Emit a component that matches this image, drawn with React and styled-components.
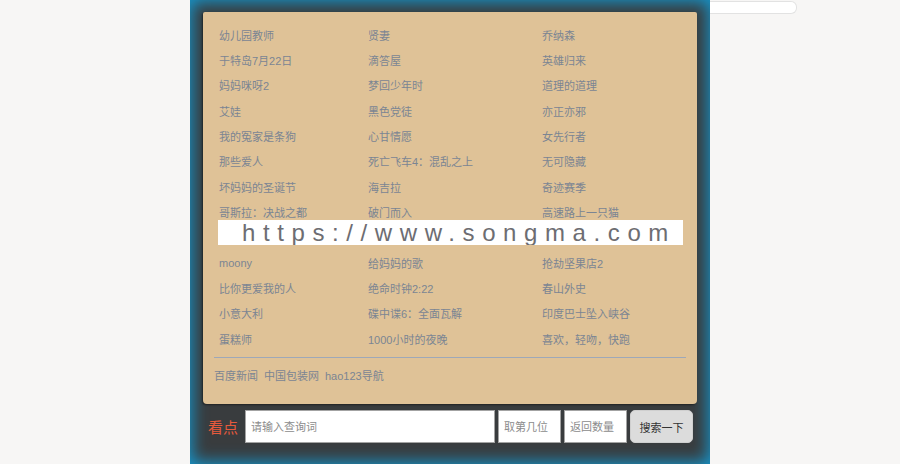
import React from 'react';
import styled, { createGlobalStyle } from 'styled-components';

const GlobalStyle = createGlobalStyle`
  html, body {
    margin: 0;
    padding: 0;
    background: #f7f6f5;
    overflow: hidden;
  }
  body {
    font-family: "Liberation Sans", "Noto Sans CJK SC", sans-serif;
  }
`;

const Page = styled.div`
  display: grid;
  grid-template-columns: 1fr 520px 1fr;
  height: 464px;
`;

const Side = styled.div`
  padding-top: 1px;
`;

const TopInput = styled.div`
  width: 86px;
  height: 11px;
  background: #fff;
  border: 1px solid #e2e2e2;
  border-left: none;
  border-radius: 0 6px 6px 0;
`;

const Shell = styled.div`
  background: #393c3e;
  box-shadow: inset 0 0 16px 2px #1598cf;
  padding: 12px 13px 0 13px;
  display: flex;
  flex-direction: column;
`;

const Panel = styled.div`
  position: relative;
  height: 392px;
  box-sizing: border-box;
  background: #dfc297;
  border-radius: 2px 2px 4px 4px;
  box-shadow: -1px 1px 2px rgba(0, 0, 0, 0.45);
  padding: 10px 11px 0 11px;
`;

const List = styled.ul`
  list-style: none;
  margin: 0;
  padding: 0 0 0 5px;
  display: grid;
  grid-template-columns: 149px 174px 1fr;
  grid-auto-rows: 25.33px;
`;

const Item = styled.li`
  font-size: 11px;
  color: #7b8593;
  display: flex;
  align-items: center;
  white-space: nowrap;
`;

const Divider = styled.hr`
  border: none;
  border-top: 1px solid #9ea8b8;
  margin: 6px 0 0 0;
`;

const Links = styled.div`
  display: flex;
  gap: 6px;
  padding-top: 9px;
  font-size: 11px;
  color: #7b8593;
`;

const Watermark = styled.div`
  position: absolute;
  top: 208px;
  left: 15px;
  width: 465px;
  height: 25px;
  background: #fff;
  color: #6d6d72;
  font-family: "Liberation Sans", sans-serif;
  font-size: 24px;
  letter-spacing: 7.6px;
  line-height: 25px;
  padding-left: 24px;
  box-sizing: border-box;
  white-space: nowrap;
  overflow: hidden;
`;

const SearchBar = styled.div`
  display: flex;
  align-items: center;
  height: 33px;
  margin-top: 6px;
  padding-left: 5px;
`;

const Brand = styled.span`
  color: #e75a3c;
  font-size: 15px;
  width: 37px;
  flex-shrink: 0;
`;

const Field = styled.input`
  box-sizing: border-box;
  width: ${(p) => p.$w}px;
  height: 33px;
  margin-right: 3px;
  border: 1px solid #a3a3a3;
  background: #fff;
  padding: 0 5px;
  font-family: inherit;
  font-size: 11px;
  outline: none;
  &::placeholder {
    color: #8c8c8c;
  }
`;

const Button = styled.button`
  box-sizing: border-box;
  width: 63px;
  height: 33px;
  border: 1px solid #cfcfcf;
  border-radius: 5px;
  background: #dcdcdc;
  color: #333;
  font-family: inherit;
  font-size: 11px;
  padding: 0;
`;

// row 9 sits under the watermark, so it is left blank
const titles = [
  ['幼儿园教师', '贤妻', '乔纳森'],
  ['于特岛7月22日', '滴答屋', '英雄归来'],
  ['妈妈咪呀2', '梦回少年时', '道理的道理'],
  ['艾娃', '黑色党徒', '亦正亦邪'],
  ['我的冤家是条狗', '心甘情愿', '女先行者'],
  ['那些爱人', '死亡飞车4：混乱之上', '无可隐藏'],
  ['坏妈妈的圣诞节', '海吉拉', '奇迹赛季'],
  ['哥斯拉：决战之都', '破门而入', '高速路上一只猫'],
  ['', '', ''],
  ['moony', '给妈妈的歌', '抢劫坚果店2'],
  ['比你更爱我的人', '绝命时钟2:22', '春山外史'],
  ['小意大利', '碟中谍6：全面瓦解', '印度巴士坠入峡谷'],
  ['蛋糕师', '1000小时的夜晚', '喜欢，轻吻，快跑'],
];

export default function App() {
  return (
    <>
      <GlobalStyle />
      <Page>
        <Side />
        <Shell>
          <Panel>
            <List>
              {titles.flat().map((t, i) => (
                <Item key={i}>{t}</Item>
              ))}
            </List>
            <Divider />
            <Links>
              <span>百度新闻</span>
              <span>中国包装网</span>
              <span>hao123导航</span>
            </Links>
            <Watermark>https://www.songma.com</Watermark>
          </Panel>
          <SearchBar>
            <Brand>看点</Brand>
            <Field $w={250} placeholder="请输入查询词" />
            <Field $w={63} placeholder="取第几位" />
            <Field $w={63} placeholder="返回数量" />
            <Button>搜索一下</Button>
          </SearchBar>
        </Shell>
        <Side>
          <TopInput />
        </Side>
      </Page>
    </>
  );
}
